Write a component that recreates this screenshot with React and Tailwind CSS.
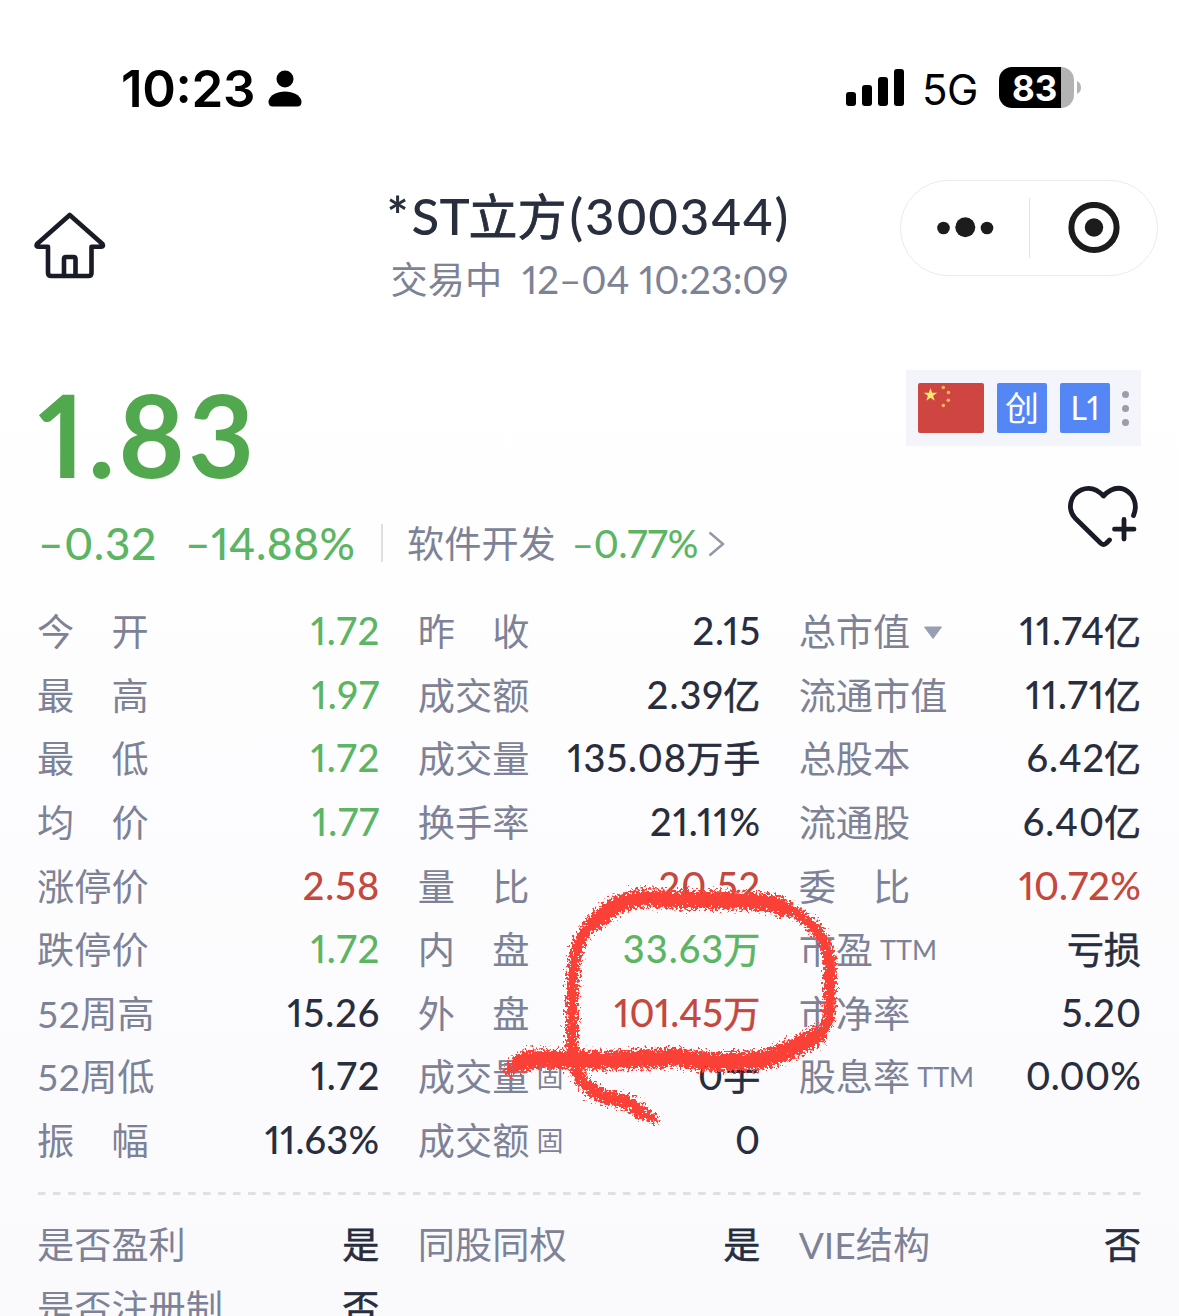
const GREEN = 'text-[#5cb562]';
const RED = 'text-[#c5483f]';

const QUOTES = [
  [
    { label: '今　开', value: '1.72', color: GREEN },
    { label: '昨　收', value: '2.15' },
    { label: '总市值', value: '11.74', unit: '亿', dropdown: true },
  ],
  [
    { label: '最　高', value: '1.97', color: GREEN },
    { label: '成交额', value: '2.39', unit: '亿' },
    { label: '流通市值', value: '11.71', unit: '亿' },
  ],
  [
    { label: '最　低', value: '1.72', color: GREEN },
    { label: '成交量', value: '135.08', unit: '万手' },
    { label: '总股本', value: '6.42', unit: '亿' },
  ],
  [
    { label: '均　价', value: '1.77', color: GREEN },
    { label: '换手率', value: '21.11%' },
    { label: '流通股', value: '6.40', unit: '亿' },
  ],
  [
    { label: '涨停价', value: '2.58', color: RED },
    { label: '量　比', value: '20.52', color: RED },
    { label: '委　比', value: '10.72%', color: RED, tight: true },
  ],
  [
    { label: '跌停价', value: '1.72', color: GREEN },
    { label: '内　盘', value: '33.63', unit: '万', color: GREEN },
    { label: '市盈', suffix: 'TTM', unit: '亏损' },
  ],
  [
    { label: '52周高', value: '15.26' },
    { label: '外　盘', value: '101.45', unit: '万', color: RED, tight: true },
    { label: '市净率', value: '5.20' },
  ],
  [
    { label: '52周低', value: '1.72' },
    { label: '成交量', suffix: '固', value: '0', unit: '手' },
    { label: '股息率', suffix: 'TTM', value: '0.00%', tight: true },
  ],
  [
    { label: '振　幅', value: '11.63%', tight: true },
    { label: '成交额', suffix: '固', value: '0' },
    null,
  ],
];

const FLAGS = [
  [
    { label: '是否盈利', unit: '是' },
    { label: '同股同权', unit: '是' },
    { label: 'VIE结构', unit: '否' },
  ],
  [{ label: '是否注册制', unit: '否' }, null, null],
];

function StatusBar() {
  return (
    <div className="flex h-[176px] items-start justify-between pr-[98px] pl-[121px] font-[Inter,sans-serif] text-black">
      <div className="flex h-[176px] items-center">
        <span className="text-[51px] leading-none font-semibold tracking-[-0.3px]">
          10<span className="relative -top-[4px]">:</span>23
        </span>
        <svg className="ml-[13px]" width="34" height="37" viewBox="0 0 34 37">
          <circle cx="17" cy="9" r="8.5" />
          <path d="M0.5 31C2 25 9 21.500 17 21.500S32 25 33.500 31Q34 36.500 29 36.500H5Q0 36.500 0.500 31Z" />
        </svg>
      </div>
      <div className="flex h-[175px] items-center">
        <div className="flex h-[37px] items-end gap-[6px]">
          <i className="h-[14px] w-[10px] rounded-[3px] bg-black" />
          <i className="h-[21px] w-[10px] rounded-[3px] bg-black" />
          <i className="h-[29px] w-[10px] rounded-[3px] bg-black" />
          <i className="h-[37px] w-[10px] rounded-[3px] bg-black" />
        </div>
        <span className="ml-[18px] w-[57px] pt-[4px] text-[42px] leading-none tracking-[-0.5px] whitespace-nowrap">5G</span>
        <div className="ml-[20px] flex h-[41px] w-[75px] items-center overflow-hidden rounded-[13px] bg-linear-to-r from-black from-[83%] to-[#b3b3b3] to-[83%] pl-[13px]">
          <span className="pt-px text-[35px] leading-none font-bold text-white">83</span>
        </div>
        <svg className="ml-[3px]" width="4" height="13" viewBox="0 0 4 13">
          <path d="M0 0Q4 2 4 6.500T0 13Z" fill="#b3b3b3" />
        </svg>
      </div>
    </div>
  );
}

function HomeIcon() {
  return (
    <svg className="mt-[36px]" width="72" height="68" viewBox="0 0 72 68" fill="none" stroke="#191c26" strokeWidth="4.600" strokeLinejoin="round" strokeLinecap="round">
      <path d="M35.700 3L3 32Q1.500 34.700 5 34.800H14V61Q14 64 17.500 64H54.500Q57.500 64 57.500 61V34.800H66.500Q70 34.700 68.500 32Z" />
      <path d="M30 63.500V47Q30 45 32 45H39.500Q41.500 45 41.500 47V63.500" />
    </svg>
  );
}

function Header() {
  return (
    <header className="grid h-[170px] grid-cols-[352px_1fr_352px]">
      <div className="pl-[34px]">
        <HomeIcon />
      </div>
      <div className="flex flex-col items-center whitespace-nowrap">
        <h1 className="mt-[14px] flex h-[52px] text-[51px] leading-[52px] font-medium text-[#282e3e]">
          <span className="mr-[3px] -ml-[2px] font-bold">*</span>
          <span className="mr-[-2px] tracking-[0.5px]">ST</span>
          <span className="text-[49px] font-normal [-webkit-text-stroke:0.8px]">立方</span>
          <span className="ml-[3px] tracking-[2px]">(300344)</span>
        </h1>
        <p className="mt-[17px] h-[40px] text-[37.200px] leading-[40px] font-normal text-[#7d8296]">
          交易中<span className="ml-[20px] text-[38.500px] tracking-[-0.1px] proportional-nums">12–04 10:23:09</span>
        </p>
      </div>
      <div className="pt-[4px] pl-[73px]">
        <div className="flex h-[96px] w-[258px] items-center rounded-full border border-[#ebebeb] bg-white">
          <svg className="ml-[36px]" width="57" height="22" viewBox="0 0 57 22" fill="#1c1c1c">
            <circle cx="6.500" cy="11" r="6.300" />
            <circle cx="28.300" cy="10.300" r="10" />
            <circle cx="50" cy="11" r="6.300" />
          </svg>
          <i className="ml-[35px] h-[60px] w-px bg-[#e2e2e2]" />
          <svg className="ml-[38px]" width="52" height="52" viewBox="0 0 52 52">
            <circle cx="26" cy="25.500" r="22.600" fill="none" stroke="#1c1c1c" strokeWidth="6" />
            <circle cx="26" cy="25.500" r="9.200" fill="#1c1c1c" />
          </svg>
        </div>
      </div>
    </header>
  );
}

function MarketTags() {
  return (
    <div className="flex h-[76px] w-[235px] items-center bg-[#f3f5fa] pl-[12px]">
      <svg width="66" height="50" viewBox="0 0 66 50">
        <rect width="66" height="50" rx="2" fill="#cf4542" />
        <path d="M12.500 5L14.100 9.800H19.300L15.100 12.800L16.700 17.700L12.500 14.700L8.300 17.700L9.900 12.800L5.700 9.800H10.900Z" fill="#ffe96b" />
        <g fill="#eeb755">
          <circle cx="25.300" cy="4.500" r="1.800" />
          <circle cx="30.500" cy="9.500" r="1.800" />
          <circle cx="30.300" cy="17.300" r="1.800" />
          <circle cx="25.300" cy="22.500" r="1.800" />
        </g>
      </svg>
      <span className="ml-[13px] flex h-[50px] w-[50px] items-center justify-center rounded-[2px] bg-[#5586f6] text-[34px] leading-none text-white">创</span>
      <span className="ml-[13px] flex h-[50px] w-[50px] items-center justify-center rounded-[2px] bg-[#5586f6] text-[32px] leading-none text-white proportional-nums">L1</span>
      <span className="ml-[12px] flex flex-col gap-[7px]">
        <i className="h-[7px] w-[7px] rounded-full bg-[#9a9eaa]" />
        <i className="h-[7px] w-[7px] rounded-full bg-[#9a9eaa]" />
        <i className="h-[7px] w-[7px] rounded-full bg-[#9a9eaa]" />
      </span>
    </div>
  );
}

function HeartPlus() {
  return (
    <svg className="mt-[39px] mr-[2px]" width="72" height="64" viewBox="0 0 72 64" fill="none" stroke="#191c26" strokeWidth="4.800" strokeLinecap="round" strokeLinejoin="round">
      <path d="M66.500 30.500C71 20 67 9 57.500 4.500C50 1.500 43 4 36.500 11C30 4 22 1.500 14 5C3 10 0 24 8 33L34 58.500Q36.500 60.500 39 58.500L42.500 55" />
      <path d="M57 34.500V54M47.500 44.200H67" />
    </svg>
  );
}

function PriceSection() {
  return (
    <section className="flex h-[254px] justify-between pt-[24px] pr-[38px] pl-[38px] whitespace-nowrap">
      <div>
        <div className="mt-[7px] h-[114px] text-[114px] leading-[114px] font-bold tracking-[3px] text-[#52a84e] proportional-nums">1.83</div>
        <div className="mt-[27px] flex h-[50px] items-center proportional-nums">
          <span className={`w-[147px] pb-px text-[44px] leading-none font-medium tracking-[0.8px] ${GREEN}`}>–0.32</span>
          <span className={`w-[196px] pb-px text-[44px] leading-none font-medium tracking-[0.5px] ${GREEN}`}>–14.88%</span>
          <i className="h-[38px] w-[2px] bg-[#dcdfe6]" />
          <span className="ml-[24px] pt-[2px] text-[37.200px] leading-none text-[#7d8296]">软件开发</span>
          <span className={`ml-[16px] w-[126px] text-[38px] leading-none font-medium ${GREEN}`}>–0.77%</span>
          <svg className="mt-[2px] ml-[10px]" width="17" height="26" viewBox="0 0 17 26" fill="none" stroke="#9297a8" strokeWidth="2.400">
            <path d="M1.500 1.500L15 13L1.500 24.500" />
          </svg>
        </div>
      </div>
      <div className="flex flex-col items-end">
        <MarketTags />
        <HeartPlus />
      </div>
    </section>
  );
}

function Cell({ item }) {
  if (!item) return <div />;
  return (
    <div className="flex h-[63.600px] items-center justify-between whitespace-nowrap">
      <div className="-ml-px flex items-center text-[#7d8296]">
        <span className="text-[37.200px] leading-none">{item.label}</span>
        {item.suffix && <span className="ml-[7px] text-[27px] leading-none">{item.suffix}</span>}
        {item.dropdown && (
          <svg className="mt-[3px] ml-[13px]" width="20" height="14" viewBox="0 0 20 14">
            <path d="M1.500 1H18.500L10 12.500Z" fill="#9a9eb2" stroke="#9a9eb2" strokeLinejoin="round" />
          </svg>
        )}
      </div>
      <div className={`flex items-center text-[38px] leading-none font-medium ${item.color || 'text-[#282e3e]'}`}>
        {item.value && (
          <span className={`-mt-[3px] proportional-nums ${item.tight ? 'tracking-[0.2px]' : '-mr-px tracking-[1px]'}`}>
            {item.value}
          </span>
        )}
        {item.unit && <span className="text-[37px] font-normal [-webkit-text-stroke:0.6px]">{item.unit}</span>}
      </div>
    </div>
  );
}

function QuoteGrid({ rows }) {
  return (
    <div className="grid grid-cols-3 gap-x-[39.500px]">
      {rows.flat().map((item, i) => (
        <Cell key={i} item={item} />
      ))}
    </div>
  );
}

// Hand-drawn marker around the inner/outer volume figures
function Marker() {
  return (
    <svg className="pointer-events-none absolute top-[860px] left-[490px]" width="370" height="280" viewBox="490 860 370 280" fill="none" stroke="#fb4038" strokeLinecap="round" strokeLinejoin="round">
      <filter id="crayon" x="-10%" y="-10%" width="120%" height="120%">
        <feTurbulence type="fractalNoise" baseFrequency="0.4" numOctaves="3" seed="4" result="noise" />
        <feDisplacementMap in="SourceGraphic" in2="noise" scale="17" xChannelSelector="R" yChannelSelector="G" />
        <feGaussianBlur stdDeviation="0.6" />
      </filter>
      <g filter="url(#crayon)">
        <path strokeWidth="19" d="M521 1062C528 1059 535 1058 545 1059C590 1061 640 1060 677 1057C700 1063 735 1062 763 1060C785 1054 804 1042 817 1036" />
        <path strokeWidth="12" d="M510 1070L519 1062M818 1034C834 1026 829 990 830 968C829 940 815 925 797 914C788 908 776 902 763 899" />
        <path strokeWidth="18" d="M783 908C772 900 740 900 690 900C665 900 637 894 620 904C609 908 602 915 596 922" />
        <path strokeWidth="12" d="M600 914C572 937 573 968 572 1000C573 1030 570 1052 575 1065C580 1082 590 1092 603 1097" />
        <path strokeWidth="14" d="M592 1089C601 1101 616 1097 626 1102C634 1105 638 1111 643 1113" />
        <path strokeWidth="9" d="M640 1110L653 1119" />
      </g>
    </svg>
  );
}

export default function App() {
  return (
    <div className="relative h-[1316px] w-[1179px] overflow-hidden bg-linear-to-b from-white from-25% to-[#fafafd] font-[Lato,'Noto_Sans_CJK_SC',sans-serif]">
      <StatusBar />
      <Header />
      <PriceSection />
      <main className="px-[38px]">
        <QuoteGrid rows={QUOTES} />
        <svg className="mt-[20px] mb-[17px] block" width="1103" height="3">
          <path d="M0 1.500H1103" stroke="#dfdfe4" strokeWidth="3" strokeDasharray="7.500 7.500" />
        </svg>
        <QuoteGrid rows={FLAGS} />
      </main>
      <Marker />
    </div>
  );
}
